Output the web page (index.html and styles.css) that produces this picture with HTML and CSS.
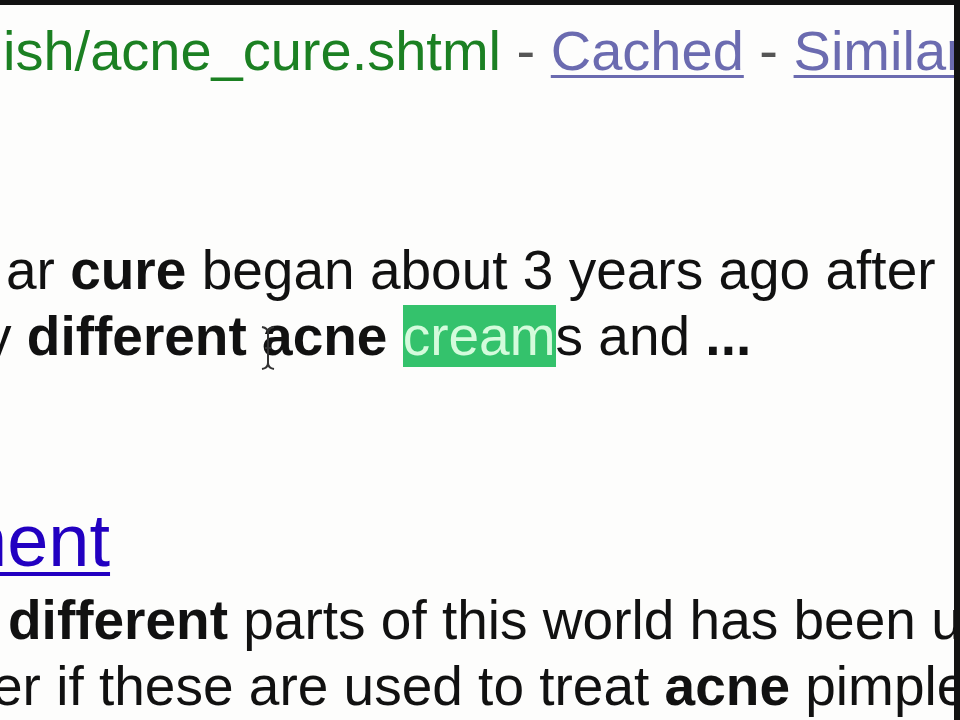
FILE: index.html
```html
<!DOCTYPE html>
<html lang="en">
    <head>
        <meta charset="UTF-8" />
        <meta name="viewport" content="width=device-width, initial-scale=1.0" />
        <title>acne cure - search results</title>
        <link rel="stylesheet" href="styles.css">
    </head>
    <body>
        <div id="screen">
            <div class="result">
                <div class="url-line">
                    <span class="url">ish/acne_cure.shtml</span> - <a href="#" class="small-link">Cached</a> - <a href="#" class="small-link">Similar</a>
                </div>
            </div>

            <div class="snippet first-snippet">
                <div class="line line-a">ar <b>cure</b> began about 3 years ago after</div>
                <div class="line line-b">y <b>different acne</b> <span class="selected">cream</span>s and <b>...</b></div>
            </div>

            <div class="result">
                <h3 class="title"><a href="#">nent</a></h3>
                <div class="snippet">
                    <div class="line line-c"><b>different</b> parts of this world has been used</div>
                    <div class="line line-d">er if these are used to treat <b>acne</b> pimples</div>
                </div>
            </div>

            <!-- curseur texte -->
            <svg class="cursor" width="18" height="46" viewBox="0 0 18 46">
                <path d="M3 2 Q9 3 9 8 L9 38 Q9 43 3 44 M15 2 Q9 3 9 8 M9 38 Q9 43 15 44 M6 23 L12 23" fill="none" stroke="#333" stroke-width="2" />
            </svg>
        </div>
    </body>
</html>
```

FILE: styles.css
```css
* {
    margin: 0;
    padding: 0;
}

body {
    background: #111;
    font-family: "Liberation Sans", Arial, sans-serif;
    color: #111;
}

#screen {
    position: relative;
    box-sizing: border-box;
    width: 960px;
    height: 720px;
    overflow: hidden;
    background: #fdfdfc;
    border-top: 5px solid #121212;
    border-right: 6px solid #121212;
    padding-top: 13px;
}

#screen .line,
#screen .url-line {
    font-size: 55px;
    line-height: 66px;
    white-space: nowrap;
}

#screen .url-line {
    font-size: 56px;
    padding-left: 3px;
    color: #555;
}

#screen .url {
    color: #1b8022;
}

#screen .small-link {
    color: #6b6bb0;
    text-decoration: underline;
    text-decoration-thickness: 3px;
    text-underline-offset: 5px;
}

#screen .first-snippet {
    margin-top: 153px;
}

#screen .line-a {
    padding-left: 6px;
}

#screen .line-b {
    margin-left: -16px;
}

#screen .selected {
    background: #34c26c;
    color: #d4fbdc;
}

#screen .title {
    margin-top: 129px;
    margin-left: -34px;
    font-size: 74px;
    line-height: 86px;
    font-weight: normal;
    white-space: nowrap;
}

#screen .title a {
    color: #2200c1;
    text-decoration: underline;
    text-decoration-thickness: 4px;
    text-underline-offset: 6px;
}

#screen .title + .snippet {
    margin-top: 3px;
}

#screen .line-c {
    padding-left: 8px;
}

#screen .line-d {
    margin-left: -8px;
}

#screen .cursor {
    position: absolute;
    left: 259px;
    top: 320px;
}
```
